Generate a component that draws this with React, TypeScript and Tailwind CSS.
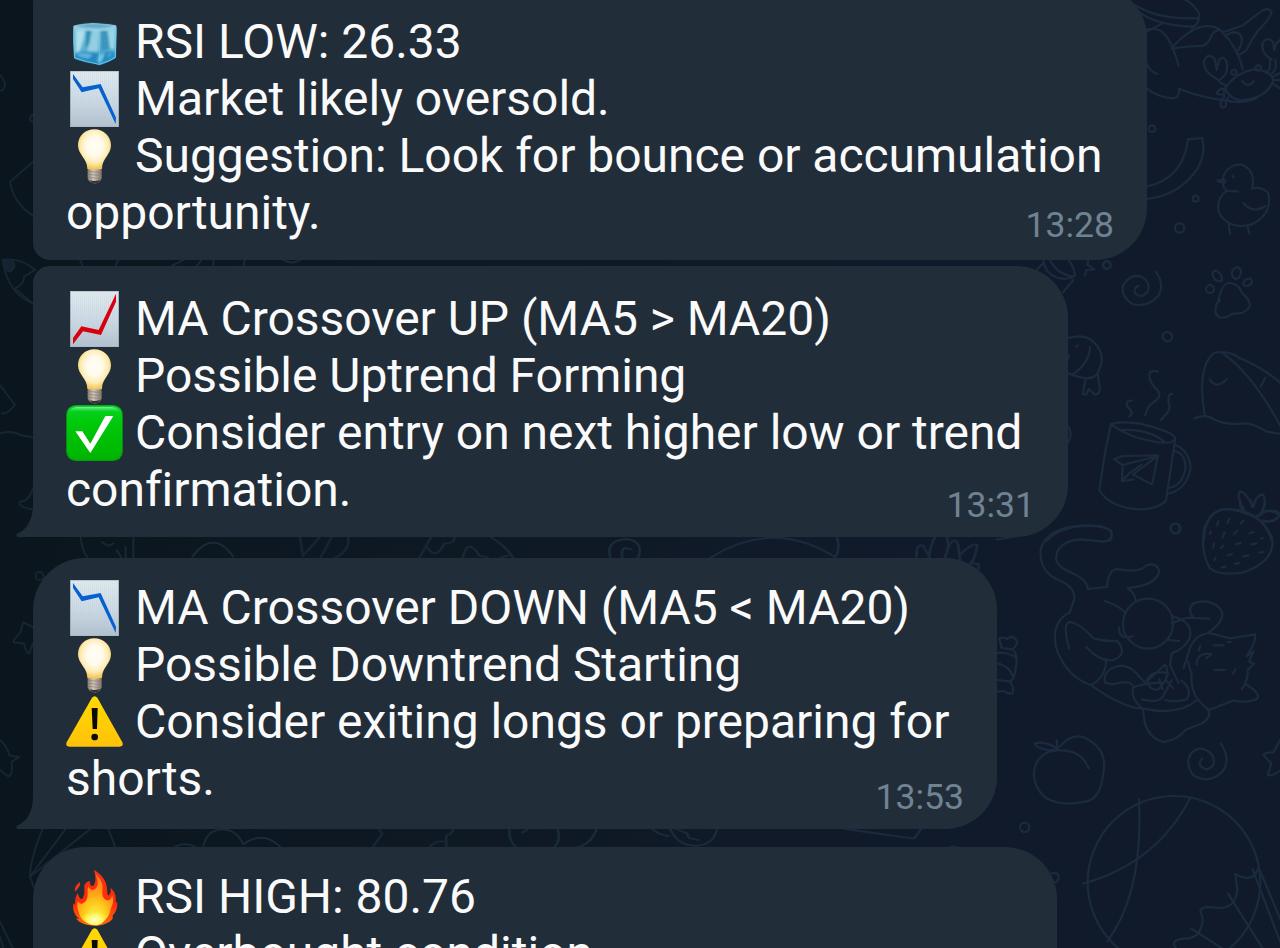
import type { ReactNode } from 'react';

type EmojiName = 'ice' | 'down' | 'up' | 'bulb' | 'check' | 'warn' | 'fire';

function Defs() {
  return (
    <svg className="absolute h-0 w-0" aria-hidden="true">
      <defs>
        <linearGradient id="paper" x1="0" y1="0" x2="0" y2="1">
          <stop offset="0" stopColor="#e4edf2" />
          <stop offset="0.55" stopColor="#cddbe6" />
          <stop offset="1" stopColor="#b3c2cf" />
        </linearGradient>
        <pattern id="mesh" width="6" height="6" patternUnits="userSpaceOnUse">
          <path d="M0 0H6M0 0V6" stroke="#9fb0be" strokeWidth="1.4" opacity="0.5" />
        </pattern>
        <radialGradient id="glass" cx="0.5" cy="0.42" r="0.56">
          <stop offset="0" stopColor="#fffefa" />
          <stop offset="0.45" stopColor="#fffae8" />
          <stop offset="0.75" stopColor="#fdebb0" />
          <stop offset="1" stopColor="#f2c65a" />
        </radialGradient>
        <linearGradient id="screw" x1="0" y1="0" x2="1" y2="0">
          <stop offset="0" stopColor="#857a70" />
          <stop offset="0.4" stopColor="#cfc6bc" />
          <stop offset="1" stopColor="#7d7268" />
        </linearGradient>
        <linearGradient id="green" x1="0" y1="0" x2="0" y2="1">
          <stop offset="0" stopColor="#0ad32a" />
          <stop offset="0.25" stopColor="#00cb0c" />
          <stop offset="1" stopColor="#00b400" />
        </linearGradient>
        <linearGradient id="shine" x1="0" y1="0" x2="0" y2="1">
          <stop offset="0" stopColor="#7cf09a" />
          <stop offset="1" stopColor="#12d636" stopOpacity="0" />
        </linearGradient>
        <linearGradient id="amber" x1="0" y1="0" x2="0" y2="1">
          <stop offset="0" stopColor="#ffda00" />
          <stop offset="1" stopColor="#ffc20a" />
        </linearGradient>
        <linearGradient id="flame" x1="0" y1="0" x2="0" y2="1">
          <stop offset="0" stopColor="#f93412" />
          <stop offset="0.6" stopColor="#ff2a08" />
          <stop offset="1" stopColor="#ff6a10" />
        </linearGradient>
        <radialGradient id="core" cx="0.5" cy="0.9" r="0.85">
          <stop offset="0" stopColor="#fff36a" />
          <stop offset="0.35" stopColor="#ffd21c" />
          <stop offset="0.65" stopColor="#ff9c18" />
          <stop offset="1" stopColor="#fb7a1e" />
        </radialGradient>
        <radialGradient id="heart" cx="0.5" cy="0.7" r="0.6">
          <stop offset="0" stopColor="#ffffd0" />
          <stop offset="0.5" stopColor="#fff65c" />
          <stop offset="1" stopColor="#ffd820" stopOpacity="0" />
        </radialGradient>
        <linearGradient id="iceface" x1="0" y1="0" x2="0" y2="1">
          <stop offset="0" stopColor="#8fcbe2" />
          <stop offset="0.6" stopColor="#5fb2d4" />
          <stop offset="1" stopColor="#2f95c9" />
        </linearGradient>
        <filter id="frost" x="-5%" y="-5%" width="110%" height="110%">
          <feGaussianBlur stdDeviation="2.6" />
        </filter>
      </defs>
    </svg>
  );
}

function Chart({ line, color }: { line: string; color: string }) {
  return (
    <>
      <rect x="13" y="2" width="145" height="168" fill="url(#paper)" />
      <rect x="13" y="2" width="145" height="168" fill="url(#mesh)" />
      <rect x="14" y="3" width="143" height="166" fill="none" stroke="#aab6c0" strokeWidth="2" />
      <path d={line} fill={color} />
    </>
  );
}

const art: Record<EmojiName, ReactNode> = {
  ice: (
    <>
      <path d="M22 38Q26 34 78 29Q145 33 151 37Q153 42 151 90L150 131Q148 139 104 155Q96 156 84 150Q28 141 24 134Q20 90 22 38Z" fill="url(#iceface)" />
      <g filter="url(#frost)">
        <path d="M28 39Q48 33 78 31Q125 33 146 38Q120 44 101 46Q60 46 28 39Z" fill="#62acc9" />
        <path d="M26 43Q62 50 101 49Q126 48 147 42" stroke="#b2e2f0" strokeWidth="4" fill="none" />
        <path d="M30 51L56 51L52 78L42 112L29 118Z" fill="#b0deea" />
        <path d="M60 52L76 52L70 93L58 104Z" fill="#3690b8" />
        <path d="M80 54L98 54L96 114L64 114Z" fill="#92cfe2" />
        <path d="M104 53L123 52L131 108L105 112Z" fill="#3b95bd" />
        <path d="M128 52L146 48L145 108L132 104Z" fill="#9bd5e6" />
        <path d="M27 120Q60 112 99 121Q128 112 147 118L147 129Q132 141 101 151Q59 146 27 133Z" fill="#2488bd" />
        <path d="M29 121Q58 118 81 124L66 136L42 130Z" fill="#5eb5db" />
        <path d="M99 123L117 120L109 141L101 149L94 142Z" fill="#6cc5e4" />
        <path d="M123 121L142 119L126 134Z" fill="#4aa9d6" />
      </g>
      <path d="M24 45L26 133Q60 147 99 153Q132 144 148 132L149 44" stroke="#6acdf0" strokeWidth="3" fill="none" opacity="0.85" />
      <path d="M100 50L100 150" stroke="#8fd8ee" strokeWidth="2" opacity="0.5" />
    </>
  ),
  down: <Chart color="#0560d0" line="M21 11L50 51L104 41L150 142L149 161L98 54L47 66L21 26Z" />,
  up: <Chart color="#d8000d" line="M150 10L150 34L105 134L51 123L21 162V143L46 108L98 119Z" />,
  bulb: (
    <>
      <path d="M65 122H107V153Q104 163 96 166L87 169L76 165Q66 161 65 153Z" fill="url(#screw)" />
      <path d="M65 132L107 136M65 141L107 145M66 150L106 154" stroke="#8a7f75" strokeWidth="2" />
      <path d="M70 158Q86 164 103 157L96 166L87 169L76 165Z" fill="#37332f" />
      <path d="M36 54C36 26 58 6 85 6C113 6 135 27 135 54C135 82 108 94 108 124Q86 130 64 124C64 94 36 82 36 54Z" fill="url(#glass)" />
    </>
  ),
  check: (
    <>
      <rect x="0.5" y="2" width="170" height="168" rx="29" fill="#079c10" />
      <rect x="3" y="4" width="165" height="162" rx="27" fill="url(#green)" />
      <path d="M8 26Q14 8 35 8H136Q157 8 163 26Q155 20 136 20H35Q16 20 8 26Z" fill="url(#shine)" />
      <path d="M28 81H49L73 118L118 35H142L73 146Z" fill="#ffffff" />
    </>
  ),
  warn: (
    <>
      <path d="M78 13Q86 4 94 13L169 147Q174 160 160 160H11Q-3 160 2 147Z" fill="url(#amber)" />
      <path d="M77 44H95L93 107H80Z" fill="#0a0a06" />
      <circle cx="86" cy="131" r="10" fill="#0a0a06" />
    </>
  ),
  fire: (
    <>
      <path d="M84 4C104 17 121 34 123 60C124 69 123 79 128 82C134 75 136 67 133 59C145 67 151 82 149 96C148 103 151 105 153 99C156 117 151 130 140 142L140 151C130 164 109 172 87 172C63 172 43 166 29 150L40 152C26 141 19 127 22 105L27 109C27 96 28 84 36 74C37 84 40 90 48 93C59 78 54 65 55 51C58 43 64 40 72 38C70 49 76 53 81 53C91 44 90 27 84 4Z" fill="url(#flame)" />
      <path d="M42 41C44 52 37 60 27 70C26 57 29 51 42 41Z" fill="#f7341a" />
      <path d="M88 17C105 32 113 48 109 68C107 85 115 94 124 96C132 96 138 89 138 80C145 96 140 110 134 121C132 143 115 165 87 169C61 169 43 154 38 131C34 119 31 110 36 98C42 110 50 108 60 97C69 85 62 69 67 54C70 66 84 69 92 57C98 44 95 30 88 17Z" fill="url(#core)" />
      <path d="M87 116C93 127 98 137 107 130C115 130 112 143 125 139C119 160 105 170 87 171C68 169 51 159 48 139C55 145 62 140 66 132C73 143 81 131 87 116Z" fill="url(#heart)" />
    </>
  ),
};

function Emoji({ name }: { name: EmojiName }) {
  return (
    <svg viewBox="0 -1 171 171" className="mr-3 h-[57px] w-[57px] shrink-0 overflow-visible" aria-hidden="true">
      {art[name]}
    </svg>
  );
}

function Line({ icon, children }: { icon?: EmojiName; children: ReactNode }) {
  return (
    <div className="flex h-[57.15px] items-start whitespace-nowrap">
      {icon && <Emoji name={icon} />}
      <span>{children}</span>
    </div>
  );
}

function LastLine({ time, children, shift }: { time: string; children: ReactNode; shift: string }) {
  return (
    <div className="flex h-[57.15px] items-end justify-between whitespace-nowrap">
      <span>{children}</span>
      <time className={`text-[35.5px] leading-[42px] tracking-normal text-[#6f8393] ${shift}`}>{time}</time>
    </div>
  );
}

function Tail() {
  return (
    <svg viewBox="0 0 18 32" className="absolute bottom-0 -left-[17px] h-8 w-[18px]" aria-hidden="true">
      <path d="M17 0C17 13 12 24 1.5 28.5C0 29.2 0 32 2 32H18V0Z" fill="#212e3a" />
    </svg>
  );
}

function Wallpaper() {
  return (
    <svg viewBox="0 0 1280 948" className="absolute inset-0 h-[948px] w-[1280px]" aria-hidden="true">
      <defs>
        <linearGradient id="ink" gradientUnits="userSpaceOnUse" x1="0" y1="0" x2="1280" y2="0">
          <stop offset="0" stopColor="#152531" />
          <stop offset="0.5" stopColor="#192b3a" />
          <stop offset="1" stopColor="#1a2a3e" />
        </linearGradient>
      </defs>
      <g fill="none" stroke="#1b2b3f" strokeWidth="6.5" strokeLinecap="round" strokeLinejoin="round">
        <g transform="translate(1040 0) scale(.33333)">
          <path d="M285 15Q350 58 470 55Q487 48 470 30Q450 0 420-5M280 20Q330 75 458 80Q476 76 477 50M320 95Q350 80 370 68M458 82L455 96M320 88Q360 80 380 110Q403 145 416 198M320 190Q330 215 352 222M320 266Q360 294 397 295Q415 294 417 278V266Q480 292 560 302Q605 313 650 295M395 143Q450 85 490 79Q528 76 545 94Q595 145 608 208M395 146Q440 137 486 138Q505 133 513 110Q520 92 535 91M550 96Q585 84 607 77L665 33Q688 20 695 37Q693 52 654 92Q635 118 618 152L598 164M555 108Q580 90 600 102Q614 125 592 155M532 238Q487 213 492 183Q505 155 525 178L530 210L537 180Q550 165 559 184Q568 220 543 236Q530 243 545 250L560 258M555 264Q586 220 637 209Q690 208 700 240Q683 295 604 301Q570 299 555 264M530 280Q540 262 552 268L553 285L532 282M553 290Q535 307 545 322Q562 325 557 303L565 292M606 242Q622 267 642 243M695 178Q663 164 668 128Q683 108 699 126L703 150L709 130L722 118M690 180V205L678 219M706 180Q712 208 696 219M697 230L720 220M700 240L720 240M697 250L720 265" />
          <circle cx="582" cy="217" r="8" /><circle cx="655" cy="204" r="8" />
          <circle cx="336" cy="386" r="10" /><circle cx="467" cy="596" r="9" /><circle cx="419" cy="684" r="14" /><circle cx="201" cy="795" r="11" />
          <path d="M320 560Q430 535 444 418L486 414Q500 460 470 510Q415 588 320 597M560 572Q538 550 555 518Q575 490 607 494Q650 515 636 566Q665 558 685 580Q694 620 670 648Q640 680 601 678Q555 675 536 635Q528 596 560 572L594 575M532 540H557M533 544L556 547M578 528L580 531M610 609Q640 643 676 618M566 670L570 702M622 680L629 702" />
        </g>
        <g transform="translate(1000 260) scale(.33333)">
          <path d="M110 30L130 8M130 0Q135 45 180 55Q215 60 225 45Q220 10 195-10M150 0Q170 42 220 50M188 98L220 60M265 0L262 14L283 28L259 30L255 46M466 34Q495 70 475 108Q440 145 395 131Q360 105 370 75Q391 40 425 50Q451 65 445 92Q427 119 405 100Q400 82 416 77M654 125Q665 68 690 69Q718 72 725 98Q749 118 750 138Q735 162 711 160Q694 159 682 171Q650 180 646 154Q646 130 660 120M638 48Q636 30 650 32Q668 45 666 62Q650 70 638 48M695 40Q700 20 715 22Q730 30 717 52Q700 65 695 40M730 75Q730 56 750 55Q765 70 740 79Z" />
          <circle cx="630" cy="87" r="12" /><circle cx="502" cy="230" r="14" /><circle cx="320" cy="15" r="12" /><circle cx="525" cy="805" r="14" />
          <path d="M204 234Q260 219 285 250Q322 290 292 340Q275 369 204 340M270 262Q268 310 216 344M228 260L234 256M204 295L207 286M257 358L248 402L259 404L266 386L285 404Q302 400 299 382L293 344M204 498Q220 520 204 548M474 334Q442 328 449 356Q455 376 472 390Q488 410 460 427Q440 440 436 466M395 422Q375 421 382 440Q405 459 388 470M516 402Q505 399 505 425Q515 445 499 462L483 480" />
          <path d="M333 493Q355 482 420 491Q520 515 526 535Q520 553 468 546Q390 534 333 493L315 578L298 690Q330 744 420 748Q475 746 498 722L526 535M363 510Q445 505 493 545M525 554Q566 570 572 622Q560 691 501 702M525 573Q555 580 557 622Q547 680 503 684M342 598L368 588L474 586L456 674L399 643L474 588L368 615L342 598M368 615L366 663L399 659M366 663L390 638L424 615" />
          <path d="M614 465Q590 320 642 279Q685 270 720 295Q790 323 845 372M670 281Q760 345 845 505M629 358Q650 390 680 358M796 353L782 380M584 475Q615 460 645 480Q680 496 730 490Q760 489 800 515L845 522M612 842Q615 752 680 747Q785 748 816 842M733 749Q706 705 721 694Q742 699 757 742Q770 702 790 704Q803 735 780 766M776 768Q811 740 842 761Q825 791 789 785M140 842Q190 790 300 798Q350 810 330 842" />
        </g>
        <g transform="translate(980 500) scale(.33333)">
          <path d="M50 119Q80 113 105 110M268 340L283 297Q285 260 237 241Q176 214 182 148Q200 85 300 77Q370 75 393 92Q400 122 372 125L300 118Q230 125 228 175Q230 202 285 223Q325 245 323 267L381 261Q385 210 410 207Q480 220 500 196Q530 185 538 215Q525 258 443 264Q465 280 467 301M375 303Q412 315 435 336M267 338Q210 370 230 448Q260 530 330 554Q440 630 490 625Q590 650 652 600M267 445Q246 368 270 366Q300 370 340 415Q380 425 412 423Q445 464 400 480Q360 486 318 440M378 485Q377 530 335 554M374 548Q370 501 428 497Q455 500 480 532L499 552M374 548L399 553Q448 540 458 555M485 624Q450 594 460 562Q495 548 552 548M486 598Q538 611 550 588L575 540M501 540Q515 508 565 520Q550 560 531 570Q507 570 501 540M505 540L555 494Q569 510 556 540L580 565M538 538L548 568M490 630Q490 708 549 726Q595 720 617 689L667 670Q700 645 680 624" />
          <circle cx="504" cy="371" r="75" />
          <path d="M580 350Q642 366 629 415Q611 448 575 460L570 495L596 549M576 370L620 353L687 356M640 352Q620 328 640 310Q680 295 712 318Q751 350 687 397M611 504L625 459Q640 403 688 399Q720 407 750 415Q780 410 825 403Q828 430 800 468L821 454L807 484L822 491L803 510Q805 540 786 567M795 552Q845 580 831 596Q810 610 758 602L687 630Q629 590 635 525L624 485M650 495Q650 455 694 462M661 438L656 452M701 436H731M704 510H735M766 508L759 522M743 426H752M690 465L680 474M418 382Q415 412 441 411L458 409M564 420L598 423M604 542Q640 570 620 598Q590 608 555 600M57 415Q70 410 81 417Q100 400 111 425Q111 436 98 448Q115 465 107 505Q105 530 91 545Q105 570 97 580Q80 582 73 573L52 575M57 415L65 444L98 448M52 459Q80 455 108 472M54 490Q90 500 98 528M52 540L91 545" />
          <circle cx="587" cy="86" r="15" />
          <path d="M793 40Q700 0 673 85Q660 157 690 205Q720 228 790 217Q885 185 877 115Q848 50 793 40M780 0Q775 27 802 42L825 52Q855 37 854 0M811 0L820 21L827 0M833 48Q860 20 898 44Q885 68 847 62M715 64L711 76M748 56L742 68M790 62L783 71M692 94L689 102M733 98L728 112M772 92L762 102M820 96L809 100M702 131L699 143M730 137L722 144M782 128L769 133M829 130L814 133M849 114L843 116M756 162L744 166M707 173L703 180M805 166L790 169M850 156L838 158M777 189L765 192M736 200L725 202" />
        </g>
        <g transform="translate(960 700) scale(.33333)">
          <path d="M300 140Q330 102 370 111Q445 145 430 220Q420 300 376 305Q250 330 225 245Q210 180 270 154Q360 138 386 205M225 130Q255 122 295 147Q255 157 225 135M290 120L293 148M782 130Q816 180 785 218Q743 253 700 226Q672 190 695 158Q725 130 758 166Q770 200 741 208Q707 200 726 176M960 120Q945 150 940 157Q905 158 913 168L934 190L923 225Q935 230 960 213" />
          <circle cx="194" cy="382" r="14" /><path d="M275 520Q298 515 296 535Q290 550 281 547" /><circle cx="642" cy="547" r="259" />
          <path d="M537 298Q550 580 442 724M692 292Q590 490 370 551M826 522L832 570Q828 625 775 624Q723 615 721 635Q735 660 722 685Q712 717 670 716Q630 720 647 744M826 522Q880 552 895 505M804 581L910 748M694 686L785 744M878 508L960 724M895 500L964 665" />
        </g>
      </g>
      <g fill="none" stroke="url(#ink)" strokeWidth="5.5" strokeLinecap="round" strokeLinejoin="round">
        <g transform="scale(.33333)">
          <path d="M0 225Q18 245 14 260Q8 274 0 272M100 343Q87 350 91 362L100 367M100 485L30 545Q40 610 100 648M8 780Q60 770 105 810M8 780Q22 880 98 910M240 780L248 797M355 780L347 797M550 780L515 798M605 780L590 798M640 780V798M735 780L730 798M850 780Q875 795 900 780" />
          <path d="M10 782Q45 775 43 800Q33 820 20 811Z" fill="#14232f" />
        </g>
        <g transform="translate(0 260) scale(.33333)">
          <path d="M45 85L98 130M45 85Q75 70 72 50L105 30M0 375L45 435Q20 465 5 460M0 520Q38 510 60 525L98 532M100 685Q85 725 60 725Q50 740 98 748M242 833Q245 870 265 897M400 833V897M577 890Q640 805 700 890" />
        </g>
        <g transform="translate(0 540) scale(.33333)">
          <path d="M305 5Q325 25 340 10M350 30L365 54M377 20V54M100 262L70 247L60 280Q36 300 42 307L72 310Q78 340 88 340L98 312M0 600Q20 615 29 647L58 651L35 665Q40 710 23 708L0 690M128 866Q90 960 90 1010L272 866M90 1010L198 866M90 1010L102 1043M325 866L345 920M525 920Q555 905 585 920M610 920Q620 870 665 868Q710 868 730 913Q790 870 840 920M0 1145L38 1224M0 1190L10 1224" />
          <circle cx="119" cy="108" r="12" />
        </g>
        <g transform="translate(300 520) scale(.4847 .33333)">
          <path d="M0 50L6 108L40 52M42 114L65 52M72 114Q105 90 99 52M246 114L270 52M262 80Q280 125 298 70Q320 72 318 52M336 114Q345 50 370 106L387 112M395 52Q430 85 440 114M415 112L430 106M640 112Q630 60 675 57Q710 65 698 112M665 112Q660 75 682 88M848 112Q975-5 1105 112M1108 52Q1115 85 1105 110M1272 110Q1270 72 1285 76L1300 114M1298 114Q1300 75 1310 52M1334 52Q1342 80 1330 114M1335 90Q1350 40 1358 75L1362 120M1363 102Q1390 65 1397 76Q1392 120 1383 130L1400 132V147" />
        </g>
        <g transform="translate(300 810) scale(.4847 .33333)">
          <path d="M163 57L170 71L150 112M316 57Q313 75 302 76V112M267 112Q280 88 302 96M432 57Q430 90 445 112M470 57L459 68M531 57Q540 90 524 112M612 57Q600 105 570 112M727 57Q740 75 760 78M764 57Q780 110 820 107Q855 102 860 57M776 57L798 70L803 84L822 90M1125 57L1267 86L1281 57M1340 112Q1347 106 1355 112" />
        </g>
      </g>
    </svg>
  );
}

export default function App() {
  return (
    <main className="relative h-[948px] w-[1280px] overflow-hidden bg-linear-to-r from-[#0b151d] via-[#0e1924] via-35% to-[#111a2a] to-70% font-[Roboto,sans-serif] text-[48px] leading-[57.15px] tracking-[-0.03px] text-[#fafafa]">
      <Defs />
      <Wallpaper />
      <section className="relative flex flex-col items-start pl-[33px]">
        <article className="-mt-[14px] h-[274px] w-[1114px] rounded-[52px] rounded-l-[17px] bg-[#212e3a] pt-[27px] pr-[33px] pl-[33px]">
          <Line icon="ice">RSI LOW: 26.33</Line>
          <Line icon="down">Market likely oversold.</Line>
          <Line icon="bulb">Suggestion: Look for bounce or accumulation</Line>
          <LastLine time="13:28" shift="-mb-[4px]">opportunity.</LastLine>
        </article>
        <article className="relative mt-1.5 h-[271px] w-[1035px] rounded-[52px] rounded-tl-[17px] rounded-bl-none bg-[#212e3a] pt-6 pr-[33px] pl-[33px]">
          <Tail />
          <Line icon="up">MA Crossover UP (MA5 &gt; MA20)</Line>
          <Line icon="bulb">Possible Uptrend Forming</Line>
          <Line icon="check">Consider entry on next higher low or trend</Line>
          <LastLine time="13:31" shift="-mb-[7px]">confirmation.</LastLine>
        </article>
        <article className="relative mt-[21px] h-[271px] w-[964px] rounded-[52px] rounded-bl-none bg-[#212e3a] pt-[21px] pr-[33px] pl-[33px]">
          <Tail />
          <Line icon="down">MA Crossover DOWN (MA5 &lt; MA20)</Line>
          <Line icon="bulb">Possible Downtrend Starting</Line>
          <Line icon="warn">Consider exiting longs or preparing for</Line>
          <LastLine time="13:53" shift="-mb-[10px]">shorts.</LastLine>
        </article>
        <article className="mt-[18px] h-[180px] w-[1024px] rounded-t-[52px] bg-[#212e3a] pt-[21px] pr-[33px] pl-[33px]">
          <Line icon="fire">RSI HIGH: 80.76</Line>
          <Line icon="warn">Overbought condition</Line>
        </article>
      </section>
    </main>
  );
}
